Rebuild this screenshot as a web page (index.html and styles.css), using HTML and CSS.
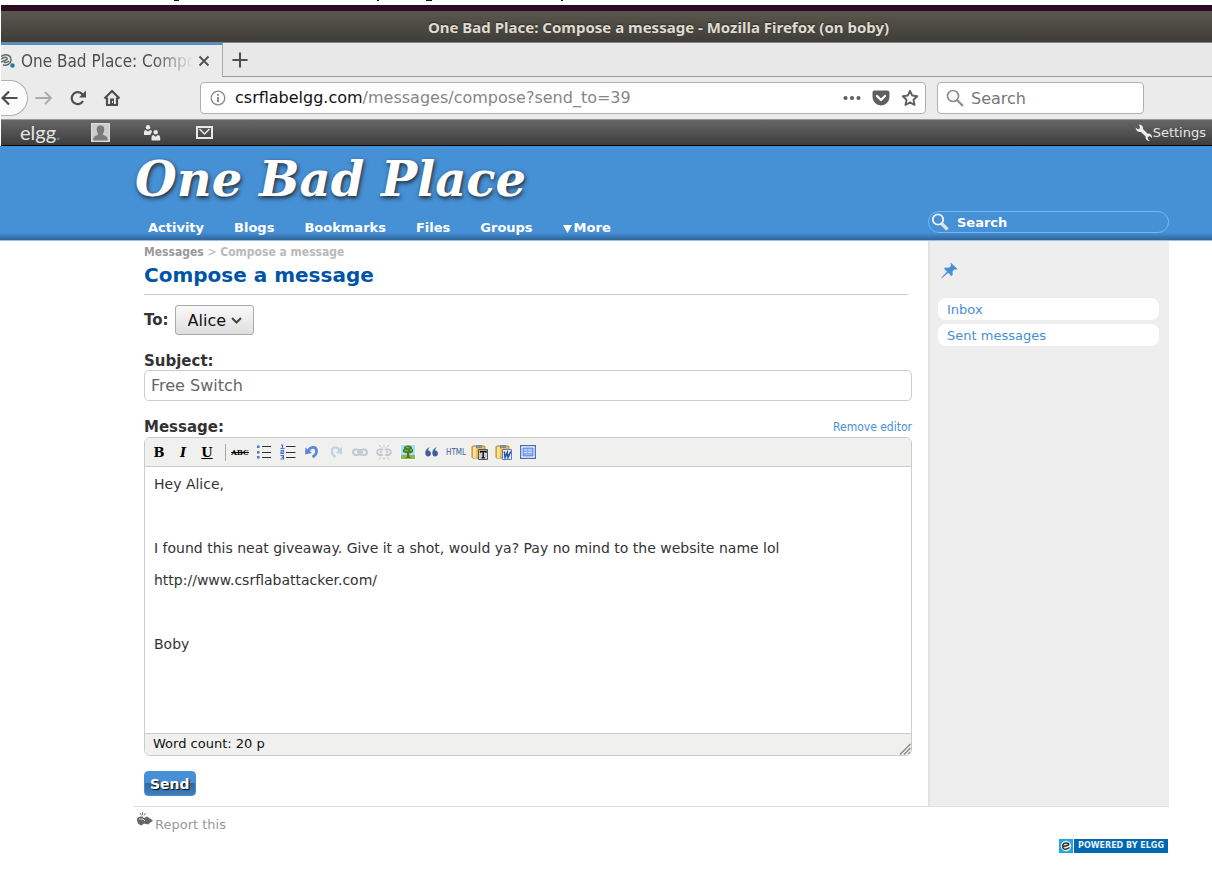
FILE: index.html
```html
<!DOCTYPE html>
<html lang="en">
<head>
<meta charset="utf-8">
<title>One Bad Place: Compose a message</title>
<link rel="stylesheet" href="styles.css">
</head>
<body>
<svg class="page-edge" width="600" height="5" aria-hidden="true"><path d="M174 .5h5M377 .5h2M426 .5h6M561 .5h2" stroke="#111"/></svg>
<div class="window">
  <div class="titlebar">One Bad Place: Compose a message - Mozilla Firefox (on boby)</div>
  <div class="tabs">
    <div class="tab">
      <svg class="favicon" width="14" height="16" viewBox="0 0 14 16"><path d="M0 3.500C4 0 10 2 10 7c0 4-4 6-8 5M0 9l6-2.500c1-1-1-3-3-2L0 6M3 9c2 1 4 0 5-1" fill="none" stroke="#666b6e" stroke-width="1.500"/><circle cx="11.500" cy="12.500" r="2.200" fill="#1a7fa8"/></svg>
      <span class="tab-title">One Bad Place: Compo</span>
      <button class="icon-btn tab-close" aria-label="Close tab"><svg width="12" height="12" viewBox="0 0 12 12"><path d="M1.500 1.500l9 9m0-9l-9 9" stroke="#4b4f52" stroke-width="1.800"/></svg></button>
    </div>
    <button class="icon-btn tab-new" aria-label="New tab"><svg width="16" height="16" viewBox="0 0 16 16"><path d="M8 .5v15M.5 8h15" stroke="#4b4f52" stroke-width="2"/></svg></button>
  </div>
  <div class="navbar">
    <button class="icon-btn back" aria-label="Back"><svg width="17" height="16" viewBox="0 0 17 16"><path d="M16.500 8H1.500M8 1.500L1.500 8 8 14.500" fill="none" stroke="#4b4f52" stroke-width="2.200"/></svg></button>
    <button class="icon-btn forward" aria-label="Forward"><svg width="18" height="14" viewBox="0 0 18 14"><path d="M.5 7H16M10 1l6 6-6 6" fill="none" stroke="#aaa" stroke-width="1.800"/></svg></button>
    <button class="icon-btn reload" aria-label="Reload"><svg width="17" height="16" viewBox="0 0 17 16"><path d="M12.500 4.500A6 6 0 1 0 13 11" fill="none" stroke="#4b4f52" stroke-width="2.200"/><path d="M16 .5v7H9z" fill="#4b4f52"/></svg></button>
    <button class="icon-btn home" aria-label="Home"><svg width="18" height="18" viewBox="0 0 18 18"><path d="M1.500 9.500L9 2l7.500 7.500M4 8.500V16h10V8.500" fill="none" stroke="#4b4f52" stroke-width="2.200"/><path d="M7 9.500h4V16H7z" fill="#4b4f52"/><path d="M9 12h1v2H9z" fill="#eee"/></svg></button>
    <div class="urlbar">
      <svg width="16" height="16" viewBox="0 0 16 16"><circle cx="8" cy="8" r="6.800" fill="none" stroke="#8a8a8a" stroke-width="1.300"/><path d="M8 7v5M8 4v1.700" stroke="#777" stroke-width="1.700"/></svg>
      <div class="url" role="textbox" aria-label="Address" contenteditable="true" spellcheck="false"><b>csrflabelgg.com</b>/messages/compose?send_to=39</div>
      <button class="icon-btn" aria-label="Page actions"><svg width="18" height="6" viewBox="0 0 18 6"><g fill="#606060"><circle cx="2.500" cy="3" r="2.100"/><circle cx="9" cy="3" r="2.100"/><circle cx="15.500" cy="3" r="2.100"/></g></svg></button>
      <button class="icon-btn pocket" aria-label="Save to Pocket"><svg width="18" height="16" viewBox="0 0 18 16"><path d="M2.500.5h13a2 2 0 0 1 2 2V7a8.500 8.500 0 0 1-17 0V2.500a2 2 0 0 1 2-2z" fill="#606060"/><path d="M5 6l4 4 4-4" fill="none" stroke="#fff" stroke-width="2.200" stroke-linecap="round" stroke-linejoin="round"/></svg></button>
      <button class="icon-btn" aria-label="Bookmark"><svg width="18" height="18" viewBox="0 0 18 18"><path d="M9 1.800l2.200 4.700 5 .7-3.700 3.500 1 5.300L9 13.400 4.500 16l1-5.300L1.800 7.200l5-.7z" fill="none" stroke="#606060" stroke-width="1.900" stroke-linejoin="round"/></svg></button>
    </div>
    <label class="browser-search">
      <svg width="18" height="18" viewBox="0 0 18 18"><circle cx="7" cy="7" r="5.500" fill="none" stroke="#8e8e8e" stroke-width="1.700"/><path d="M11 11l6 6" stroke="#8e8e8e" stroke-width="2.200"/></svg>
      <input type="text" placeholder="Search" aria-label="Web search">
    </label>
  </div>

  <nav class="topbar">
    <a href="#" class="elgg-logo">elgg<i>.</i></a>
    <a href="#" class="avatar" aria-label="Profile"><svg width="19" height="19" viewBox="0 0 19 19"><path d="M0 0h19v19H0z" fill="#ccc"/><path d="M.5.5h18v18H.5z" fill="none" stroke="#ddd"/><path d="M9.500 2.500c3 0 4 2 3.700 4.500-.2 2-1 3.200-1.500 4 .3 1.500 5 1.800 5 5v1.500H2.300V16c0-3.200 4.700-3.500 5-5-.6-.8-1.300-2-1.500-4C5.500 4.500 6.500 2.500 9.500 2.500z" fill="#7b7b7b"/></svg></a>
    <a href="#" class="friends" aria-label="Friends"><svg width="18" height="16" viewBox="0 0 18 16"><g fill="#e8e8e8"><circle cx="5" cy="2.300" r="2.200"/><path d="M1 10V7.500C1 5.800 2 5 3 5l2 1.800L7 5c1 0 2 .8 2 2L7.500 9v1z"/><circle cx="12.700" cy="7.300" r="2.200"/><path d="M8.500 15.500V12.500c0-1.700 1-2.500 2-2.500l2.200 1.800 2-1.800c1.300 0 2.500.8 2.500 2.500v3z"/></g></svg></a>
    <a href="#" class="mail" aria-label="Messages"><svg width="17" height="13" viewBox="0 0 17 13"><path d="M1 1h15v11H1z" fill="none" stroke="#e8e8e8" stroke-width="2"/><path d="M3.500 3l5 5 5-5" fill="none" stroke="#e8e8e8" stroke-width="1.500"/></svg></a>
    <a href="#" class="settings"><svg width="18" height="17" viewBox="0 0 18 17"><path d="M4 .5c2.500 0 4.500 2 4 4.500l4.500 4.500c2.500-.5 5 1.500 4.500 4.500l-2.300-2-2 1.200.3 2L15 17c-3 .3-5-1.800-4.300-4.500L6 8C3.500 8.500.5 7 .7 3.500L3 5.500l2-1.200L4.500 2z" fill="#eee"/></svg>Settings</a>
  </nav>

  <header class="site-header">
    <div class="brand">
      <h1><a href="#">One Bad Place</a></h1>
      <nav class="site-menu">
        <a href="#">Activity</a><a href="#">Blogs</a><a href="#">Bookmarks</a><a href="#">Files</a><a href="#">Groups</a><a href="#" class="more"><svg width="9" height="9" viewBox="0 0 9 9"><path d="M0 1h9L4.500 9z" fill="#fff"/></svg>More</a>
      </nav>
    </div>
    <label class="site-search">
      <svg width="18" height="18" viewBox="0 0 18 18"><path d="M10.500 10.500l6 6" stroke="#e0e0e0" stroke-width="3.400"/><circle cx="7" cy="6.500" r="5.200" fill="none" stroke="#f0f0f0" stroke-width="1.800"/></svg>
      <input type="text" value="Search" aria-label="Search site">
    </label>
  </header>

  <div class="content">
    <main>
      <nav class="crumbs"><a href="#">Messages</a> <i>&gt;</i> <span>Compose a message</span></nav>
      <h2>Compose a message</h2>
      <form>
        <div class="to-row">
          <label for="to">To:</label>
          <span class="select-wrap">
            <select id="to"><option>Alice</option></select>
            <svg width="11" height="7" viewBox="0 0 11 7"><path d="M1 1l4.500 4.500L10 1" fill="none" stroke="#444" stroke-width="2"/></svg>
          </span>
        </div>
        <label for="subject" class="field-label">Subject:</label>
        <input id="subject" class="subject" type="text" value="Free Switch">
        <div class="message-head"><span id="message-label">Message:</span><a href="#">Remove editor</a></div>
        <div class="editor">
          <div class="toolbar" role="toolbar" aria-label="Formatting">
            <button type="button" class="serif">B</button>
            <button type="button" class="serif italic">I</button>
            <button type="button" class="serif underline">U</button>
            <span class="sep"></span>
            <button type="button" class="abc">ABC</button>
            <button type="button" aria-label="Bulleted list"><svg width="16" height="16" viewBox="0 0 16 16"><path d="M6 2.500h9M6 8.500h9M6 13.500h9" stroke="#333"/><path d="M1 1.500h2.500v2.500H1zM1 7h2.500v2.500H1zM1 12h2.500v2.500H1z" fill="#4b78c4"/></svg></button>
            <button type="button" aria-label="Numbered list"><svg width="16" height="16" viewBox="0 0 16 16"><path d="M6 2.500h9.500M6 8.500h9.500M6 13.500h9.500" stroke="#333"/><path d="M1 1h1.500v3.500M.5 4.500h4M.5 6.500h3v1.500H1v1.500h3M.5 11.500h3v3.500h-3M1.500 13.200h2" fill="none" stroke="#3f70cf" stroke-width="1.200"/></svg></button>
            <button type="button" aria-label="Undo"><svg width="16" height="16" viewBox="0 0 16 16"><path d="M4.500 7C6 2.500 12 2 12.500 6.500c.3 3-1.500 5-4 6.500" fill="none" stroke="#5c86dc" stroke-width="2.800"/><path d="M1.500 3.500l-.5 7 7-1.500z" fill="#5c86dc"/></svg></button>
            <button type="button" aria-label="Redo" disabled><svg width="16" height="16" viewBox="0 0 16 16"><path d="M12 7.500C11 2.500 4.500 2 4 6.500c-.3 3 1 5 3.500 6.500" fill="none" stroke="#c3d0e8" stroke-width="2.200"/><path d="M14 3v7L8 9z" fill="#c3d0e8"/></svg></button>
            <button type="button" aria-label="Insert link" disabled><svg width="16" height="16" viewBox="0 0 16 16"><g fill="none" stroke="#c2c8d4" stroke-width="1.900"><rect x="1" y="5.500" width="7" height="5.500" rx="2.700"/><rect x="8" y="5.500" width="7" height="5.500" rx="2.700"/><path d="M5 8.200h6"/></g></svg></button>
            <button type="button" aria-label="Remove link" disabled><svg width="16" height="16" viewBox="0 0 16 16"><g fill="none" stroke="#c5c8d0"><path d="M7 5.500H4a2.700 2.700 0 0 0 0 5.500h3M9 5.500h3a2.700 2.700 0 0 1 0 5.500H9M4 8.200h2M10 8.200h2" stroke-width="1.900"/><path d="M3 1l2.500 2.500M8 .5v3M13 1l-2.500 2.500M3 15.500L5.500 13M8 16v-3M13 15.500L10.500 13"/></g></svg></button>
            <button type="button" aria-label="Insert image"><svg width="16" height="16" viewBox="0 0 16 16"><path d="M0 0h16v16H0z" fill="#fafafa"/><path d="M1 1h14v10H1z" fill="#a8ddf5"/><path d="M1 11h14v4H1z" fill="#82c04a"/><path d="M7 8h2l.5 5 2 1H5l2-1z" fill="#7c5b22"/><path d="M8 1.500c3 0 4 1 4 3 2 1 1.500 4-1 4.500-1 .6-2-.2-3 0-1 .3-2 .3-3-.2-2.500-.3-3-3-1-4C3.500 3 5 1.500 8 1.500z" fill="#3f8527"/><path d="M6 3l3 1M5 6l3 1M10 6l2 0" stroke="#85b93b" stroke-width="1.300"/></svg></button>
            <button type="button" aria-label="Block quote"><svg width="16" height="16" viewBox="0 0 16 16"><path d="M6.500 3C4.500 4 4 5.500 4.200 6.500 6 6.500 7 8 7 9.500 7 11.500 5.500 12.500 4 12.500 2.300 12.500 1.300 11 1.300 9 1.300 5.500 3.500 3.500 6.500 3zM13.500 3c-2 1-2.500 2.500-2.300 3.500 1.800 0 2.800 1.500 2.800 3 0 2-1.500 3-3 3-1.700 0-2.700-1.500-2.700-3.500 0-3.500 2.200-5.500 5.200-6z" fill="#405f9e"/></svg></button>
            <button type="button" class="html">HTML</button>
            <button type="button" aria-label="Paste as plain text"><svg width="18" height="16" viewBox="0 0 18 16"><rect x="1" y="2" width="13" height="12" rx="1" fill="#edbd45" stroke="#b68a2c"/><path d="M2 3h3v11H2z" fill="#fae09a"/><path d="M5 1h6v3H5z" fill="#888d9d"/><path d="M7.500 5.500h9v10h-9z" fill="#c9ccd2" stroke="#555"/><path d="M9.500 8.800V7.500h5.500v1.300M12.200 7.500v6M10.700 13.700h3" fill="none" stroke="#111" stroke-width="1.500"/></svg></button>
            <button type="button" aria-label="Paste from Word"><svg width="18" height="16" viewBox="0 0 18 16"><rect x="1" y="2" width="13" height="12" rx="1" fill="#edbd45" stroke="#b68a2c"/><path d="M2 3h3v11H2z" fill="#fae09a"/><path d="M5 1h6v3H5z" fill="#888d9d"/><path d="M7.500 5.500h9v10h-9z" fill="#e1ebfa" stroke="#6580b8"/><path d="M9.300 7.500l.8 6 2.200-5 .7 5 2.800-6" fill="none" stroke="#2850a0" stroke-width="1.500"/></svg></button>
            <button type="button" aria-label="Full screen"><svg width="16" height="16" viewBox="0 0 16 16"><path d="M.7 1.700h14.600v12.600H.7z" fill="#fff" stroke="#4a6cb4" stroke-width="1.300"/><path d="M3 4h10v8H3z" fill="#8eb2f5" stroke="#5b84d8"/><path d="M4 6h3M8 6h4M4 8.500h3M8 8.500h4" stroke="#c9dcff"/></svg></button>
          </div>
          <div class="message" role="textbox" aria-multiline="true" aria-labelledby="message-label" contenteditable="true" spellcheck="false">
            <p>Hey Alice,</p>
            <p><br></p>
            <p>I found this neat giveaway. Give it a shot, would ya? Pay no mind to the website name lol</p>
            <p>http://www.csrflabattacker.com/</p>
            <p><br></p>
            <p>Boby</p>
          </div>
          <div class="status"><span>Word count: 20 p</span>
            <svg width="12" height="12" viewBox="0 0 12 12"><path d="M1 11.500L11.500 1M5 11.500L11.500 5M9 11.500L11.500 9" stroke="#888" stroke-width="1.400"/></svg>
          </div>
        </div>
        <button type="submit" class="send">Send</button>
      </form>
    </main>
    <aside>
      <a href="#" aria-label="Bookmark this page"><svg class="pin" width="17" height="17" viewBox="0 0 17 17"><path d="M9.500.5l7 6.500-1.500.8-1.800-.3-1.700 2 .2 3.500-1.500 1-3-3.200L.5 16.500l.2-1.200L6 9.500 3 6.800 4.200 5.500l3.500.3L10 4z" fill="#4690d6"/></svg></a>
      <ul>
        <li><a href="#">Inbox</a></li>
        <li><a href="#">Sent messages</a></li>
      </ul>
    </aside>
  </div>

  <footer>
    <a href="#" class="report"><svg width="17" height="14" viewBox="0 0 17 14"><path d="M4 1l1.500 2.500M6.500 0v3M9.500 1L8 3.500" stroke="#777"/><path d="M1 7.500C1 5 4 4 6.500 4.500L8 6l3-1.500 6 4-5 4-4-1-2.500 2C3 13 1 11 1 7.500z" fill="#666"/><path d="M3 7h4l2 2" fill="none" stroke="#ddd"/></svg>Report this</a>
    <a href="#" class="powered"><svg width="14" height="14" viewBox="0 0 14 14"><path d="M0 0h14v14H0z" fill="#25a5e0"/><circle cx="7" cy="7" r="5.200" fill="#eee"/><path d="M3.500 8l6-2c1-1-1-2.500-3-2C4 4.500 3 7 4 9c1 2 4 1.500 6.500-.5" fill="none" stroke="#333" stroke-width="1.500"/></svg><span>POWERED BY ELGG</span></a>
  </footer>
</div>
</body>
</html>
```
FILE: styles.css
```css
* { box-sizing: border-box; }
body { margin: 0; background: #fff; color: #333; font: 13px/16px "DejaVu Sans", sans-serif; }
a { color: #4690d6; text-decoration: none; }
button, input, select { font-family: inherit; margin: 0; }
svg { display: block; flex: none; }
p, h1, h2, ul { margin: 0; padding: 0; }
.window { margin-left: 1px; }

.titlebar { height: 38px; padding-right: 10px; padding-left: 114px; border-top: 6px solid #2b0a22; border-bottom: 1px solid #85847d; background: linear-gradient(#5a574d, #3f3d38); color: #dfdbd2; font: bold 15px/32px "Noto Sans", sans-serif; text-align: center; text-shadow: 0 -1px 1px #2a2925; }

.icon-btn { display: flex; align-items: center; justify-content: center; padding: 0; border: 0; background: none; }
.tabs { display: flex; height: 34px; background: #e8e8e8; box-shadow: inset 0 -1px #999; }
.tab { display: flex; align-items: center; width: 222px; padding-right: 12px; border-top: 2px solid #4a90d9; border-right: 1px solid #aaa; background: #ebebeb; color: #4b4f52; font: 17px "DejaVu Sans Condensed", "DejaVu Sans", sans-serif; }
.tab-title { flex: 1; margin: 0 1px 0 6px; white-space: nowrap; line-height: 24px; -webkit-mask-image: linear-gradient(90deg, #000 75%, transparent 98%); mask-image: linear-gradient(90deg, #000 75%, transparent 98%); }
.tab-new { width: 34px; }

.navbar { display: flex; align-items: center; height: 43px; padding-right: 68px; border-bottom: 1px solid #999; background: #ebebeb; }
.back { width: 27px; height: 36px; border: 1px solid #b0b0b0; border-left: 0; border-radius: 0 18px 18px 0; background: #fbfbfb; justify-content: flex-start; }
.forward { margin-left: 7px; }
.reload { margin-left: 17px; }
.home { margin-left: 16px; }
.urlbar, .browser-search { display: flex; align-items: center; height: 32px; border: 1px solid #b1b1b1; border-radius: 4px; background: #fff; }
.urlbar { flex: 1; margin-left: 79px; padding: 0 6px 0 9px; }
.url { flex: 1; margin-left: 9px; color: #868686; font-size: 16px; line-height: 24px; outline: 0; }
.url b { color: #111; font-weight: normal; }
.pocket { margin: 0 11px; }
.browser-search { width: 207px; margin-left: 11px; padding: 0 8px; }
.browser-search input { width: 100%; margin-left: 7px; padding: 0; border: 0; background: none; font-size: 16px; outline: 0; }
.browser-search input::placeholder { color: #777; opacity: 1; }

.topbar { display: flex; align-items: center; height: 26px; padding: 0 6px 0 19px; border-bottom: 1px solid #000; background: linear-gradient(#666, #3d3d3d); }
.topbar a { color: #e4e4e4; }
.elgg-logo { width: 71px; height: 24px; font: 20px/22px Lato, sans-serif; }
.elgg-logo i { color: #1e9fd0; font-style: normal; }
.friends { margin-left: 33px; }
.mail { margin-left: 35px; }
.topbar .settings { display: flex; align-items: center; margin-left: auto; font-size: 13px; }

.site-header { display: flex; justify-content: space-between; align-items: flex-end; height: 95px; margin-left: -1px; padding: 0 43px 0 135px; background: linear-gradient(#4690d6 92%, #2f659a); border-bottom: 1px solid #9fc0e0; }
.site-header h1 { height: 74px; font: italic bold 48px/66px "DejaVu Serif", serif; }
.site-header h1 a { color: #fff; text-shadow: 1px 2px 4px #222; }
.site-menu { display: flex; height: 20px; padding-left: 13px; gap: 30px; }
.site-menu a { color: #fff; font-weight: bold; }
.site-menu .more { display: flex; gap: 2px; }
.site-menu .more svg { margin-top: 4px; }
.site-search { display: flex; align-items: center; width: 241px; height: 22px; margin-bottom: 7px; padding: 0 2px; border: 1px solid #71b9f7; border-radius: 11px; }
.site-search input { width: 200px; margin-left: 8px; padding: 0; border: 0; background: none; color: #fff; font-size: 13px; font-weight: bold; outline: 0; }

.content { display: flex; margin: 0 43px 0 133px; border-bottom: 1px solid #dedede; }
main { flex: 1; padding: 3px 16px 10px 10px; }
.crumbs { color: #bababa; font: bold 12px/16px "DejaVu Sans Condensed", "DejaVu Sans", sans-serif; }
.crumbs a { color: #999; }
.crumbs i { font-style: normal; font-weight: normal; }
h2 { margin-right: 4px; padding: 3px 0 7px; border-bottom: 1px solid #ccc; color: #0054a7; font-size: 20px; line-height: 24px; }
label, #message-label { color: #333; font-size: 15px; font-weight: bold; }
.to-row { display: flex; align-items: center; height: 30px; margin: 10px 0 17px; gap: 6px; }
.select-wrap { position: relative; }
.select-wrap svg { position: absolute; right: 12px; top: 12px; pointer-events: none; }
.to-row select { display: block; width: 79px; height: 30px; padding: 0 0 0 12px; border: 1px solid #aaa; border-radius: 3px; appearance: none; background: linear-gradient(#fafafa, #dedede); color: #111; font-size: 16px; }
.field-label { display: block; line-height: 18px; }
.subject { display: block; width: 100%; height: 31px; padding: 0 6px; border: 1px solid #ccc; border-radius: 5px; color: #666; font-size: 16px; }
.message-head { display: flex; justify-content: space-between; margin-top: 17px; line-height: 19px; }
.message-head a { font-family: "DejaVu Sans Condensed", "DejaVu Sans", sans-serif; font-size: 12px; }
.editor { overflow: hidden; border: 1px solid #ccc; border-radius: 6px; }
.toolbar { display: flex; align-items: center; height: 29px; padding-left: 2px; border-bottom: 1px solid #ccc; background: #f0f0ee; }
.toolbar button { display: flex; align-items: center; justify-content: center; width: 24px; height: 24px; padding: 0; border: 0; background: none; color: #000; }
.toolbar .serif { font: bold 13px "DejaVu Serif", serif; }
.toolbar .italic { font-style: italic; }
.toolbar .underline { text-decoration: underline; }
.toolbar .abc { font: bold 8px "DejaVu Serif Condensed", "DejaVu Serif", serif; text-decoration: line-through; }
.toolbar .html { color: #3d5f9f; font: 8px "DejaVu Sans Condensed", "DejaVu Sans", sans-serif; }
.sep { width: 1px; height: 17px; margin: 0 2px 0 6px; background: #aaa; }
.message { min-height: 266px; padding: 9px 9px 10px; color: #333; font-size: 14px; outline: 0; }
.message p { margin-bottom: 16px; }
.status { display: flex; justify-content: space-between; align-items: flex-end; height: 22px; padding-left: 8px; border-top: 1px solid #ccc; background: #f0f0ee; color: #111; font-size: 13px; line-height: 22px; }
.send { display: block; height: 25px; margin-top: 15px; padding: 0 5px; border: 1px solid #4690d6; border-radius: 4px; background: linear-gradient(#4690d6 48%, #34699c 50%, #3f7fbe); color: #fff; font-size: 14px; font-weight: bold; text-shadow: 1px 1px 1px #000; }

aside { width: 241px; padding: 21px 10px 0 8px; border-left: 2px solid #e2e2e2; background: #eee; }
.pin { margin-left: 3px; }
aside ul { display: grid; margin-top: 19px; gap: 4px; list-style: none; }
aside li a { display: block; height: 22px; padding: 0 9px; border-radius: 8px; background: #fff; line-height: 23px; }

footer { display: flex; justify-content: space-between; align-items: flex-start; margin: 0 44px 0 135px; }
.report { display: flex; align-items: flex-start; margin-top: 5px; gap: 2px; color: #999; line-height: 25px; }
.powered { display: flex; height: 14px; margin-top: 32px; gap: 1px; }
.powered span { width: 94px; background: #0067b0; color: #e6f1fa; font-size: 8px; font-weight: bold; line-height: 14px; text-align: center; white-space: nowrap; }
```
